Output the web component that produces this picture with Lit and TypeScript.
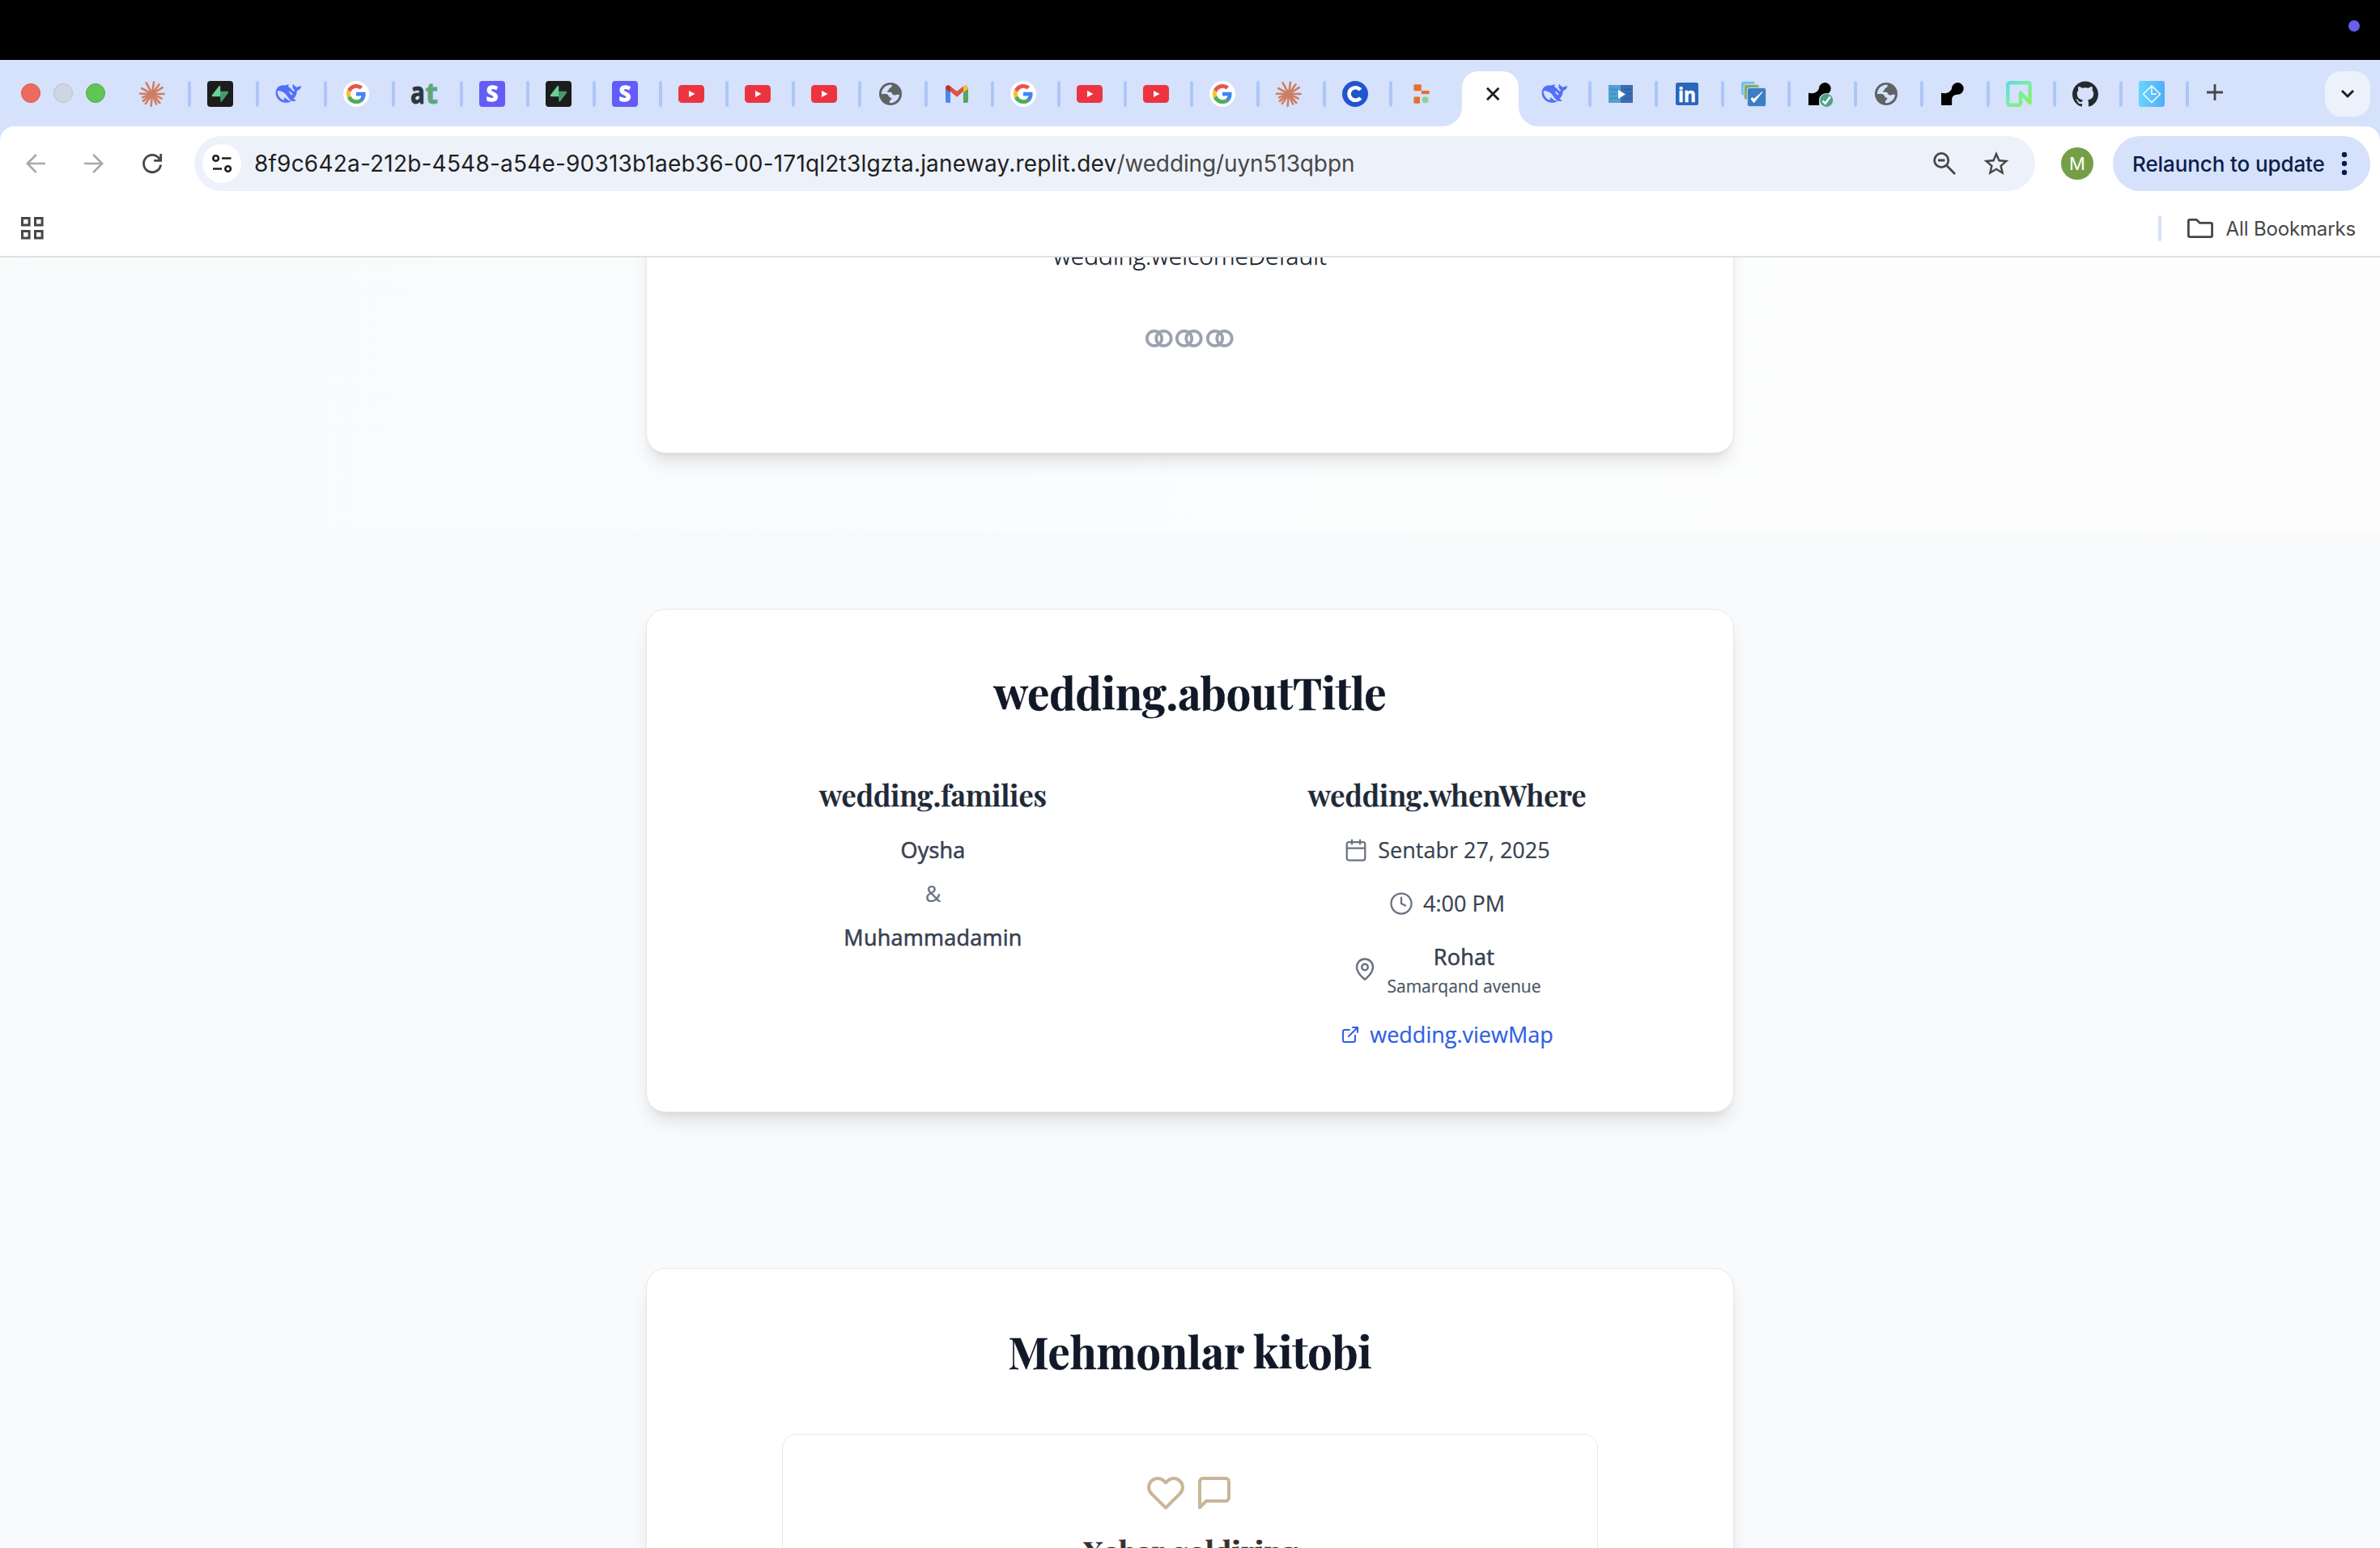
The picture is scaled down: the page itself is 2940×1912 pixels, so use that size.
import { LitElement, html, svg, css } from "lit";
import { customElement } from "lit/decorators.js";

const WHALE =
  "M23.748 4.482c-.254-.124-.364.113-.512.234-.051.039-.094.09-.137.136-.372.397-.806.657-1.373.626-.829-.046-1.537.214-2.163.848-.133-.782-.575-1.248-1.247-1.548-.352-.156-.708-.311-.955-.65-.172-.241-.219-.51-.305-.774-.055-.16-.11-.323-.293-.35-.2-.031-.278.136-.356.276-.313.572-.434 1.202-.422 1.84.027 1.436.633 2.58 1.838 3.393.137.093.172.187.129.323-.082.28-.18.552-.266.833-.055.179-.137.217-.329.14a5.526 5.526 0 01-1.736-1.18c-.857-.828-1.631-1.742-2.597-2.458a11.365 11.365 0 00-.689-.471c-.985-.957.13-1.743.388-1.836.27-.098.093-.432-.779-.428-.872.004-1.67.295-2.687.684a3.055 3.055 0 01-.465.137 9.597 9.597 0 00-2.883-.102c-1.885.21-3.39 1.102-4.497 2.623C.082 8.606-.231 10.684.152 12.85c.403 2.284 1.569 4.175 3.36 5.653 1.858 1.533 3.997 2.284 6.438 2.14 1.482-.085 3.133-.284 4.994-1.86.47.234.962.327 1.78.397.63.059 1.236-.03 1.705-.128.735-.156.684-.837.419-.961-2.155-1.004-1.682-.595-2.113-.926 1.096-1.296 2.746-2.642 3.392-7.003.05-.347.007-.565 0-.845-.004-.17.035-.237.23-.256a4.173 4.173 0 001.545-.475c1.396-.763 1.96-2.015 2.093-3.517.02-.23-.004-.467-.247-.588zM11.581 18c-2.089-1.642-3.102-2.183-3.52-2.16-.392.024-.321.471-.235.763.09.288.207.486.371.739.114.167.192.416-.113.603-.673.416-1.842-.14-1.897-.167-1.361-.802-2.5-1.86-3.301-3.307-.774-1.393-1.224-2.887-1.298-4.482-.02-.386.093-.522.477-.592a4.696 4.696 0 011.529-.039c2.132.312 3.946 1.265 5.468 2.774.868.86 1.525 1.887 2.202 2.891.72 1.066 1.494 2.082 2.48 2.914.348.292.625.514.891.677-.802.09-2.14.11-3.054-.614zm1-6.44a.306.306 0 01.415-.287.302.302 0 01.2.288.306.306 0 01-.31.307.303.303 0 01-.304-.308zm3.11 1.596c-.2.081-.399.151-.59.16a1.245 1.245 0 01-.798-.254c-.274-.23-.47-.358-.552-.758a1.73 1.73 0 01.016-.588c.07-.327-.008-.537-.239-.727-.187-.156-.426-.199-.688-.199a.559.559 0 01-.254-.078c-.11-.054-.2-.19-.114-.358.028-.054.16-.186.192-.21.356-.202.767-.136 1.146.016.352.144.618.408 1.001.782.391.451.462.576.685.914.176.265.336.537.445.848.067.195-.019.354-.25.452z";

const OCTOCAT =
  "M12 .297c-6.63 0-12 5.373-12 12 0 5.303 3.438 9.8 8.205 11.385.6.113.82-.258.82-.577 0-.285-.01-1.04-.015-2.04-3.338.724-4.042-1.61-4.042-1.61C4.422 18.07 3.633 17.7 3.633 17.7c-1.087-.744.084-.729.084-.729 1.205.084 1.838 1.236 1.838 1.236 1.07 1.835 2.809 1.305 3.495.998.108-.776.417-1.305.76-1.605-2.665-.3-5.466-1.332-5.466-5.93 0-1.31.465-2.38 1.235-3.22-.135-.303-.54-1.523.105-3.176 0 0 1.005-.322 3.3 1.23.96-.267 1.98-.399 3-.405 1.02.006 2.04.138 3 .405 2.28-1.552 3.285-1.23 3.285-1.23.645 1.653.24 2.873.12 3.176.765.84 1.23 1.91 1.23 3.22 0 4.61-2.805 5.625-5.475 5.92.42.36.81 1.096.81 2.22 0 1.606-.015 2.896-.015 3.286 0 .315.21.69.825.57C20.565 22.092 24 17.592 24 12.297c0-6.627-5.373-12-12-12";

/* Angle in degrees and length of every ray of the sunburst. */
const RAYS: [number, number][] = [
  [0, 14.5], [26, 13], [50, 14.5], [68, 13.5], [95, 15], [124, 14.5], [142, 14], [160, 12.5],
  [181, 15], [208, 14.5], [242, 15.5], [278, 14.5], [306, 14.5], [328, 15],
];

const CAMERA = svg`<path d="M2 14.8C7 16 12.500 15 14.900 9.800A7.400 7.400 0 1 1 22 16.800C18 17 15.300 19 15.200 23V30H2z" fill="#000"/>`;

const FAVICONS: Record<string, unknown> = {
  burst: svg`<g stroke="#cf7d61" stroke-width="2.6" stroke-linecap="round">${RAYS.map(([a, r]) => {
    const t = (a * Math.PI) / 180;
    return svg`<line x1="16" y1="16" x2=${16 + r * Math.cos(t)} y2=${16 + r * Math.sin(t)}></line>`;
  })}</g>`,
  bolt: svg`<rect width="32" height="32" rx="4" fill="#1c1c1c"/><path d="M16 12.700H25.200Q27 13.300 25.800 15L18.300 24.900Q16.600 26.600 16.200 24.800z" fill="#45996f"/><path d="M14.600 6.300Q16 5 16.200 7V19.200H7Q5 18.600 6.200 16.900z" fill="#6bcf98"/>`,
  whale: svg`<path transform="translate(.6 0) scale(1.300)" d=${WHALE} fill="#5170f6"/>`,
  google: svg`<circle cx="16" cy="16" r="16" fill="#fff"/><g transform="translate(2.800 2.800) scale(1.100)"><path d="M22.560 12.250c0-.78-.07-1.530-.2-2.250H12v4.260h5.920c-.26 1.370-1.040 2.530-2.210 3.310v2.770h3.570c2.080-1.920 3.280-4.740 3.280-8.090z" fill="#4285f4"/><path d="M12 23c2.970 0 5.460-.98 7.280-2.660l-3.570-2.770c-.98.66-2.230 1.060-3.710 1.060-2.860 0-5.290-1.930-6.160-4.530H2.180v2.840C3.990 20.530 7.700 23 12 23z" fill="#4fae56"/><path d="M5.840 14.090c-.22-.66-.35-1.360-.35-2.090s.13-1.430.35-2.090V7.070H2.180C1.430 8.550 1 10.220 1 12s.43 3.450 1.180 4.930l2.850-2.220.81-.62z" fill="#f3c13a"/><path d="M12 5.380c1.620 0 3.060.56 4.210 1.640l3.150-3.150C17.450 2.090 14.970 1 12 1 7.700 1 3.990 3.470 2.180 7.070l3.660 2.840c.87-2.600 3.300-4.530 6.160-4.530z" fill="#e9554b"/></g>`,
  at: svg`<text class="glyph" font-size="38" y="28" textLength="18" lengthAdjust="spacingAndGlyphs" x="-1" fill="#2a3640" stroke="#2a3640" stroke-width=".8">a</text><text class="glyph" font-size="36" y="28" x="17.500" textLength="15.500" lengthAdjust="spacingAndGlyphs" fill="#5fa67c" stroke="#5fa67c" stroke-width=".8">t</text>`,
  stripe: svg`<rect width="32" height="32" rx="4" fill="#645cf6"/><text class="glyph" font-size="26" x="16" y="25.300" text-anchor="middle" fill="#fff" stroke="#fff" stroke-width="1.400">S</text>`,
  youtube: svg`<rect y="5" width="32" height="22" rx="4.500" fill="#ec3440"/><path d="M13 12v8l7.500-4z" fill="#fff"/>`,
  globe: svg`<circle cx="16" cy="16" r="14" fill="#5f6368"/><path d="M4.900 15.700C5.200 10 9.400 5.600 15 4.800L17.600 4.700C18 7 17.200 7.800 15.500 8.600C13.500 9.400 15 11 13 11.800C11.500 12.500 12 13.400 13 13.800C15 13.600 17.500 13.700 18 15.400C18.600 17.200 20.300 18 22 17.400C23.600 16.800 25 16.600 27 17.200C26.300 22.600 22 26.800 16.500 27.200L14.800 27C15 25 15 23.500 16.500 23.200C18 22.800 17.500 21 16.200 20.600C13.500 20 14 17.200 11.500 16.300C9.600 15.700 7.500 15.900 4.900 16.200z" fill="#d6e1fb"/>`,
  gmail: svg`<path d="M2 8v17a2 2 0 0 0 2 2h4V13z" fill="#4f86ec"/><path d="M30 8v17a2 2 0 0 1-2 2h-4V13z" fill="#56a55c"/><path d="M8 13V6.500l8 6.300 8-6.300V13l-8 6.800z" fill="#dd5144"/><path d="M2 9C2 5 5.500 4.300 8 6.500V14L2 9.800z" fill="#b8342b"/><path d="M30 9c0-4-3.500-4.700-6-2.500V14l6-4.200z" fill="#f1bf42"/>`,
  cblue: svg`<circle cx="16" cy="16" r="16" fill="#2155cd"/><path d="M22.500 11.200A7.800 7.800 0 1 0 22.500 20.800" fill="none" stroke="#fff" stroke-width="4.600"/>`,
  blocks: svg`<rect x="6.500" y="4.300" width="9.300" height="8" rx="1" fill="#e5702f"/><rect x="15.800" y="12" width="9.800" height="4.200" rx="1" fill="#e5702f"/><rect x="6.500" y="19.500" width="7.500" height="8.300" rx="1" fill="#e5702f"/><circle cx="20.600" cy="23.200" r="4" fill="#8fd392"/>`,
  film: svg`<path d="M1 5h15v22H1z" fill="#4fa0d0"/><path d="M16 5h15v22H16z" fill="#3b6db3"/><path d="M3 10.500h10M3 16h7M3 21.500h10" stroke="#3d8abb" stroke-width="1.400"/><path d="M20 10.500h9M23 16h6M20 21.500h9" stroke="#2f5c9c" stroke-width="1.400"/><path d="M13 11v11l9-5.500z" fill="#fff"/>`,
  linkedin: svg`<rect x="2" y="2" width="28" height="28" rx="2.500" fill="#2a66bc"/><text class="glyph" font-size="25" x="16" y="25.500" text-anchor="middle" textLength="22" lengthAdjust="spacingAndGlyphs" fill="#fff" stroke="#fff" stroke-width=".5">in</text>`,
  stack: svg`<rect x="1" y=".8" width="17" height="17" rx="3" fill="#76c0e9"/><rect x="4.300" y="4.300" width="19" height="19" rx="3" fill="#7eab67" stroke="#d6e1fb"/><rect x="8.300" y="8.300" width="23.400" height="23.400" rx="3" fill="#3a7fc3" stroke="#d6e1fb"/><path d="M13 22l3.500 4.800L27 13.500 16.500 22.500l-1.700-2z" fill="#fff" stroke="#fff"/>`,
  camOk: svg`${CAMERA}<circle cx="24.200" cy="23.900" r="9" fill="#d6e1fb"/><circle cx="24.200" cy="23.900" r="8" fill="#4aa384"/><path d="M19.500 24.500l3.300 3.300 6-8.300" fill="none" stroke="#fff" stroke-width="2.600"/>`,
  cam: CAMERA,
  neon: svg`<defs><linearGradient id="ng" x1="0" y1="0" x2="1" y2="1"><stop offset="0" stop-color="#62dcd8"/><stop offset=".5" stop-color="#7deca6"/><stop offset="1" stop-color="#85f25c"/></linearGradient></defs><path d="M18 28.500V14.500L29.500 27V4.500Q29.500 2.300 27.500 2.300H5Q2.300 2.300 2.300 5V27Q2.300 29.700 5 29.700H15Q18 29.700 18 27" fill="none" stroke="url(#ng)" stroke-width="4.400" stroke-linejoin="round"/>`,
  github: svg`<path transform="scale(1.333)" d=${OCTOCAT} fill="#24292e"/>`,
  kite: svg`<defs><linearGradient id="kg"><stop stop-color="#66d5fb"/><stop offset="1" stop-color="#52adf8"/></linearGradient></defs><rect width="32" height="32" rx="3" fill="url(#kg)"/><path d="M16 6L26.500 16.300 16 26.500 5.500 16.300zM16 6V16.300H22" fill="none" stroke="#fff" stroke-width="1.400"/>`,
};

const TABS =
  "burst bolt whale google at stripe bolt stripe youtube youtube youtube globe gmail google youtube youtube google burst cblue blocks * whale film linkedin stack camOk globe cam neon github kite".split(" ");

@customElement("browser-tabs")
class BrowserTabs extends LitElement {
  static styles = css`
    :host { display: flex; height: 82px; background: #d6e1fb; box-sizing: border-box; padding-left: 26px; }
    .lights { display: flex; gap: 16px; width: 124px; padding-top: 29px; }
    .light { width: 24px; height: 24px; border-radius: 50%; box-sizing: border-box; border: 1px solid #d9574b; background: #ed6a5e; }
    .light.idle { background: #ced5e3; border-color: #b9c0cf; }
    .light.go { background: #61c554; border-color: #52a946; }
    .tab { display: flex; box-sizing: border-box; width: 82px; padding: 26px 0 0 22px; }
    .tab.wide { width: 84px; }
    .tab svg { width: 32px; height: 32px; overflow: visible; flex: none; }
    .sep { width: 4px; height: 32px; border-radius: 2px; background: #acc7f6; margin-left: 26px; flex: none; }
    .wide .sep { margin-left: 28px; }
    .active { width: 82px; padding-top: 14px; display: flex; justify-content: center; }
    .active svg { width: 120px; height: 68px; flex: none; }
    .plus { width: 20px; height: 20px; padding: 30px 0 0 24px; flex: 1; }
    .plus svg { display: block; width: 20px; height: 20px; }
    .menu { width: 56px; height: 56px; border-radius: 20px; background: #ebf2fc; margin: 14px 12px 0 0; display: flex; align-items: center; justify-content: center; }
    .glyph { font-family: "Open Sans", "Noto Sans", sans-serif; font-weight: 700; }
  `;
  render() {
    return html`
      <div class="lights"><span class="light"></span><span class="light idle"></span><span class="light go"></span></div>
      ${TABS.map((name, i) =>
        name === "*"
          ? html`<div class="active"><svg viewBox="0 0 120 68"><path d="M0 68A24 24 0 0 0 25 44V20A20 20 0 0 1 45 0H75A20 20 0 0 1 95 20V44A24 24 0 0 0 120 68z" fill="#fff"/><path d="M56 20.800l14.400 14.400M70.400 20.800L56 35.200" stroke="#1f1f1f" stroke-width="2.800"/></svg></div>`
          : html`<div class="tab ${i < 5 ? "wide" : ""}"><svg viewBox="0 0 32 32">${FAVICONS[name]}</svg>${
              TABS[i + 1] === "*" ? "" : html`<span class="sep"></span>`
            }</div>`
      )}
      <div class="plus"><svg viewBox="0 0 20 20"><path d="M10 0v20M0 10h20" stroke="#474747" stroke-width="2.800"/></svg></div>
      <div class="menu"><svg width="18" height="12" viewBox="0 0 18 12"><path d="M2 2l7 7 7-7" fill="none" stroke="#1f1f1f" stroke-width="3"/></svg></div>
    `;
  }
}

@customElement("browser-toolbar")
class BrowserToolbar extends LitElement {
  static styles = css`
    :host { display: block; background: #d6e1fb; font-family: Inter, Roboto, "Liberation Sans", sans-serif; }
    .panel { background: #fff; border-radius: 18px 18px 0 0; border-bottom: 2px solid #dfe2e0; }
    .row { display: flex; align-items: center; height: 92px; padding: 0 12px 0 32px; }
    svg { display: block; flex: none; overflow: visible; }
    .nav { display: flex; gap: 48px; margin-right: 40px; }
    .omni { display: flex; align-items: center; box-sizing: border-box; width: 2274px; height: 68px; border-radius: 34px; background: #edf2fa; padding: 0 32px 0 10px; }
    .site { width: 48px; height: 48px; border-radius: 50%; background: #fff; display: flex; align-items: center; justify-content: center; margin-right: 16px; }
    .url { flex: 1; font-size: 28px; letter-spacing: 0.2px; color: #1f1f1f; white-space: nowrap; }
    .path { color: #474747; letter-spacing: -0.12px; }
    .actions { display: flex; align-items: center; gap: 34px; }
    .avatar { width: 40px; height: 40px; border-radius: 50%; background: #749f47; color: #fff; font-size: 22px; display: flex; align-items: center; justify-content: center; margin: 0 24px 0 32px; }
    .relaunch { display: flex; align-items: center; box-sizing: border-box; width: 318px; height: 68px; border-radius: 34px; background: #d6e1fb; color: #0b1d4b; font-size: 26px; font-weight: 500; letter-spacing: -0.1px; padding: 0 28px 0 24px; white-space: nowrap; justify-content: space-between; }
    .marks { display: flex; align-items: center; height: 68px; padding: 0 30px 0 26px; color: #474747; font-size: 24px; letter-spacing: -0.15px; }
    .rule { width: 4px; height: 32px; border-radius: 2px; background: #d6e1fb; margin: 0 32px 0 auto; }
    .folder { margin-right: 16px; }
  `;
  render() {
    return html`<div class="panel">
      <div class="row">
        <div class="nav">
          <svg width="24" height="24" fill="none" stroke="#a9a9a9" stroke-width="2.600"><path d="M24 12H2M12.800 1L1.800 12l11 11"/></svg>
          <svg width="24" height="24" fill="none" stroke="#a9a9a9" stroke-width="2.600"><path d="M0 12h22M11.200 1l11 11-11 11"/></svg>
          <svg width="24" height="24" fill="none" stroke="#474747" stroke-width="2.800"><path d="M22.600 13.500A10.600 10.600 0 1 1 20.500 5.600L22.500 8"/><path d="M22.700 0V8.400H14.200"/></svg>
        </div>
        <div class="omni">
          <span class="site"><svg width="24" height="24" fill="none" stroke="#1f1f1f" stroke-width="2.600"><circle cx="4.600" cy="5.500" r="3.300"/><path d="M12 5.500h11.500M1 18.500h11"/><circle cx="19.600" cy="18.500" r="3.300"/></svg></span>
          <span class="url">8f9c642a-212b-4548-a54e-90313b1aeb36-00-171ql2t3lgzta.janeway.replit.dev<span class="path">/wedding/uyn513qbpn</span></span>
          <span class="actions">
            <svg width="28" height="28" fill="none" stroke="#474747" stroke-width="2.800"><circle cx="10.200" cy="10" r="8.600"/><path d="M16.500 16.300L27 27M6 10h8.500"/></svg>
            <svg width="32" height="32" viewBox="0 0 24 24" fill="#474747"><path d="M22 9.240l-7.190-.62L12 2 9.190 8.630 2 9.240l5.460 4.730L5.820 21 12 17.270 18.180 21l-1.630-7.030L22 9.240zM12 15.400l-3.760 2.270 1-4.280-3.320-2.880 4.380-.38L12 6.100l1.710 4.040 4.380.38-3.320 2.880 1 4.280L12 15.400z" transform="translate(-1.800 -1.600) scale(1.150)"/></svg>
          </span>
        </div>
        <span class="avatar">M</span>
        <div class="relaunch"><span>Relaunch to update</span><svg width="8" height="28" fill="#0b1d4b"><circle cx="4" cy="3" r="3.200"/><circle cx="4" cy="14" r="3.200"/><circle cx="4" cy="25" r="3.200"/></svg></div>
      </div>
      <div class="marks">
        <svg width="28" height="28" fill="none" stroke="#474747" stroke-width="3"><path d="M1.500 1.500h8.600v8.600H1.500zM17.500 1.500h8.600v8.600h-8.600zM1.500 17.500h8.600v8.600H1.500zM17.500 17.500h8.600v8.600h-8.600z"/></svg>
        <span class="rule"></span>
        <svg class="folder" width="32" height="24" fill="none" stroke="#474747" stroke-width="2.800" stroke-linejoin="round"><path d="M3 1.400h8.500l4 4H29q1.600 0 1.600 1.600V21q0 1.600-1.600 1.600H3q-1.600 0-1.600-1.600V3q0-1.600 1.600-1.600z"/></svg>
        <span>All Bookmarks</span>
      </div>
    </div>`;
  }
}

@customElement("wedding-page")
class WeddingPage extends LitElement {
  static styles = css`
    :host { display: block; height: 1594px; overflow: hidden; background: #f9fafc; font-family: "Open Sans", "Noto Sans", sans-serif; font-size: 27px; line-height: 42px; color: #374151; text-align: center; -webkit-text-stroke: 0.2px currentColor; }
    .section { padding: 96px 0; display: flex; justify-content: center; }
    .hero { height: 338px; box-sizing: border-box; padding: 0 0 96px; align-items: flex-end; background: linear-gradient(100deg, #f9fafc 0%, #fbfcfe 45%, #fcfdfd 62%, #fcfdfc 100%); }
    .card { box-sizing: border-box; width: 1344px; background: #fff; border: 1px solid #e5e7eb; border-radius: 24px; padding: 72px 72px 73px; box-shadow: 0 15px 22.5px -4.5px rgba(0,0,0,.1), 0 6px 9px -6px rgba(0,0,0,.1); }
    .hero + .section .card { padding-bottom: 74px; }
    .hero .card { padding-bottom: 123px; }
    .intro { margin: 0 0 60px; font-size: 30px; line-height: 49px; font-weight: 300; color: #111827; -webkit-text-stroke: 0.4px currentColor; }
    .rings { display: flex; justify-content: center; gap: 4px; height: 36px; align-items: center; padding-right: 2px; }
    svg { display: block; flex: none; overflow: visible; }
    h2, h3 { margin: 0; font-family: "Playfair Display", "Liberation Serif", serif; -webkit-text-stroke: 0.5px currentColor; }
    h2 { font-size: 54px; line-height: 60px; font-weight: 700; color: #111827; margin-bottom: 72px; }
    h3 { font-size: 36px; line-height: 48px; font-weight: 600; color: #1f2937; margin-bottom: 24px; }
    .cols { display: grid; grid-template-columns: 1fr 1fr; gap: 72px; }
    .names { display: flex; flex-direction: column; gap: 12px; }
    .medium { letter-spacing: 0.25px; -webkit-text-stroke: 0.6px currentColor; font-weight: 500; }
    .amp { color: #6b7280; }
    .facts { display: flex; flex-direction: column; gap: 24px; }
    .fact { display: flex; align-items: center; justify-content: center; gap: 12px; }
    .fact svg { color: #6b7280; }
    .place { display: flex; flex-direction: column; }
    .street { font-size: 21px; line-height: 30px; color: #4b5563; }
    .link, .fact.link svg { color: #2f5fe6; }
    .book { box-sizing: border-box; width: 1008px; margin: 0 auto; height: 360px; border: 1px solid #e5e7eb; border-radius: 18px; padding-top: 48px; }
    .pair { display: flex; justify-content: center; gap: 12px; margin-bottom: 23px; }
    .book h3 { color: #38302e; letter-spacing: 0.2px; font-weight: 700; padding-left: 2px; }
  `;
  private icon(size: number, body: unknown, width = 2) {
    return html`<svg width=${size} height=${size} viewBox="0 0 24 24" fill="none" stroke="currentColor" stroke-width=${width} stroke-linecap="round" stroke-linejoin="round">${body}</svg>`;
  }
  render() {
    return html`
      <section class="section hero">
        <div class="card">
          <p class="intro">wedding.welcomeDefault</p>
          <div class="rings">${[0, 1, 2].map(
            () => html`<svg width="33.500" height="24" fill="none" stroke="#9ca3af" stroke-width="3.800"><circle cx="11" cy="12" r="9.200"/><circle cx="22.500" cy="12" r="9.200"/></svg>`
          )}</div>
        </div>
      </section>
      <section class="section">
        <div class="card">
          <h2>wedding.aboutTitle</h2>
          <div class="cols">
            <div>
              <h3>wedding.families</h3>
              <div class="names"><span class="medium">Oysha</span><span class="amp">&amp;</span><span class="medium">Muhammadamin</span></div>
            </div>
            <div>
              <h3>wedding.whenWhere</h3>
              <div class="facts">
                <div class="fact">${this.icon(30, svg`<path d="M8 2v4M16 2v4M3 10h18"/><rect x="3" y="4" width="18" height="18" rx="2"/>`, 1.8)}<span>Sentabr 27, 2025</span></div>
                <div class="fact">${this.icon(30, svg`<circle cx="12" cy="12" r="10"/><path d="M12 6v6l4 2"/>`, 1.8)}<span>4:00 PM</span></div>
                <div class="fact">${this.icon(30, svg`<path d="M20 10c0 4.993-5.539 10.193-7.399 11.799a1 1 0 0 1-1.202 0C9.539 20.193 4 14.993 4 10a8 8 0 0 1 16 0"/><circle cx="12" cy="10" r="3"/>`, 2)}<span class="place"><span class="medium">Rohat</span><span class="street">Samarqand avenue</span></span></div>
                <div class="fact link">${this.icon(24, svg`<path d="M15 3h6v6M10 14L21 3M18 13v6a2 2 0 0 1-2 2H5a2 2 0 0 1-2-2V8a2 2 0 0 1 2-2h6"/>`)}<span>wedding.viewMap</span></div>
              </div>
            </div>
          </div>
        </div>
      </section>
      <section class="section">
        <div class="card">
          <h2>Mehmonlar kitobi</h2>
          <div class="book">
            <div class="pair"><svg width="48" height="48" viewBox="0 0 24 24" fill="none" stroke="#c9b699" stroke-width="2" stroke-linecap="round" stroke-linejoin="round"><path d="M20.840 4.610a5.500 5.500 0 0 0-7.780 0L12 5.670l-1.060-1.060a5.500 5.500 0 0 0-7.780 7.780l1.060 1.060L12 21.230l7.780-7.780 1.060-1.060a5.500 5.500 0 0 0 0-7.780z"/></svg><svg width="48" height="48" viewBox="0 0 24 24" fill="none" stroke="#c9b699" stroke-width="2" stroke-linecap="round" stroke-linejoin="round"><path d="M21 15a2 2 0 0 1-2 2H7l-4 4V5a2 2 0 0 1 2-2h14a2 2 0 0 1 2 2z"/></svg></div>
            <h3>Xabar qoldiring</h3>
          </div>
        </div>
      </section>
    `;
  }
}

@customElement("app-root")
class AppRoot extends LitElement {
  static styles = css`
    :host { display: block; width: 2940px; height: 1912px; overflow: hidden; }
    .menubar { height: 74px; background: #000; display: flex; justify-content: flex-end; }
    .dot { width: 14px; height: 14px; border-radius: 50%; background: #6661ea; margin: 25px 25px 0 0; }
  `;
  render() {
    return html`<div class="menubar"><span class="dot"></span></div>
      <browser-tabs></browser-tabs>
      <browser-toolbar></browser-toolbar>
      <wedding-page></wedding-page>`;
  }
}
